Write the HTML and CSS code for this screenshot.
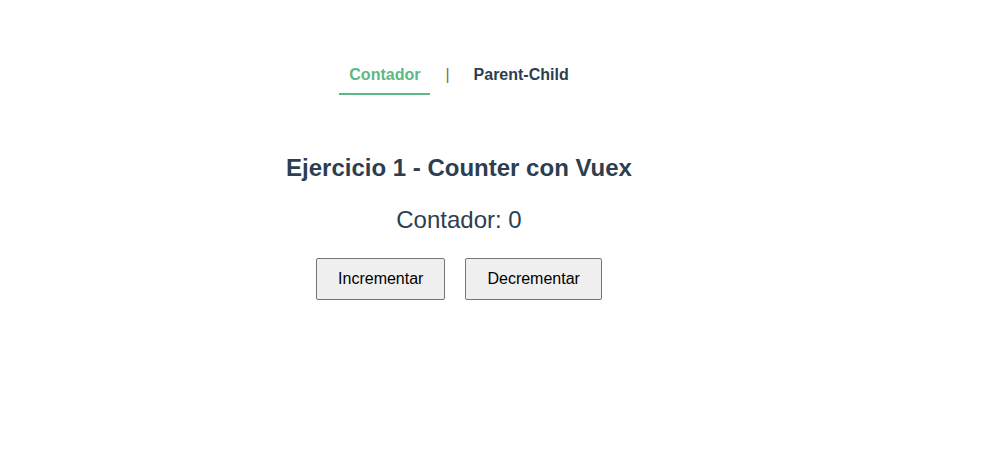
FILE: index.html
```html
<!DOCTYPE html>
<html lang="es">
<head>
<meta charset="utf-8">
<title>Vuex</title>
<link rel="stylesheet" href="styles.css">
</head>
<body>
<div class="app">
  <nav class="nav">
    <a class="nav-link active" href="#">Contador</a>
    <span class="sep">|</span>
    <a class="nav-link" href="#">Parent-Child</a>
  </nav>
  <main class="counter">
    <h2 class="title">Ejercicio 1 - Counter con Vuex</h2>
    <p class="value">Contador: 0</p>
    <div class="actions">
      <button class="btn">Incrementar</button>
      <button class="btn">Decrementar</button>
    </div>
  </main>
</div>
</body>
</html>
```
FILE: styles.css
```css
html, body {
  margin: 0;
  background: #fff;
}
.app {
  width: 918px;
  font-family: "Liberation Sans", Arial, Helvetica, sans-serif;
  color: #2c3e50;
  text-align: center;
}
.nav {
  padding-top: 61px;
  display: flex;
  justify-content: center;
  align-items: flex-start;
}
.nav-link {
  font-weight: bold;
  font-size: 16px;
  line-height: 18px;
  color: #2c3e50;
  text-decoration: none;
  padding: 5px 10px 9px;
  border-bottom: 2px solid transparent;
}
.nav-link.active {
  color: #5cb885;
  border-bottom-color: #5cb885;
}
.sep {
  padding: 5px 14px 0 15px;
  font-size: 16px;
  line-height: 18px;
  color: #8a6a4a;
}
.counter {
  padding-top: 59px;
}
.title {
  margin: 0;
  font-size: 24px;
  font-weight: bold;
  line-height: 28px;
}
.value {
  margin: 24px 0 0;
  font-size: 24px;
  line-height: 28px;
}
.actions {
  margin-top: 24px;
  display: flex;
  justify-content: center;
  gap: 20px;
}
.btn {
  font-family: "Liberation Sans", Arial, sans-serif;
  font-size: 16px;
  color: #000;
  background: #efefef;
  border: 1px solid #767676;
  border-radius: 2px;
  padding: 11px 21px;
  line-height: 18px;
}
```
